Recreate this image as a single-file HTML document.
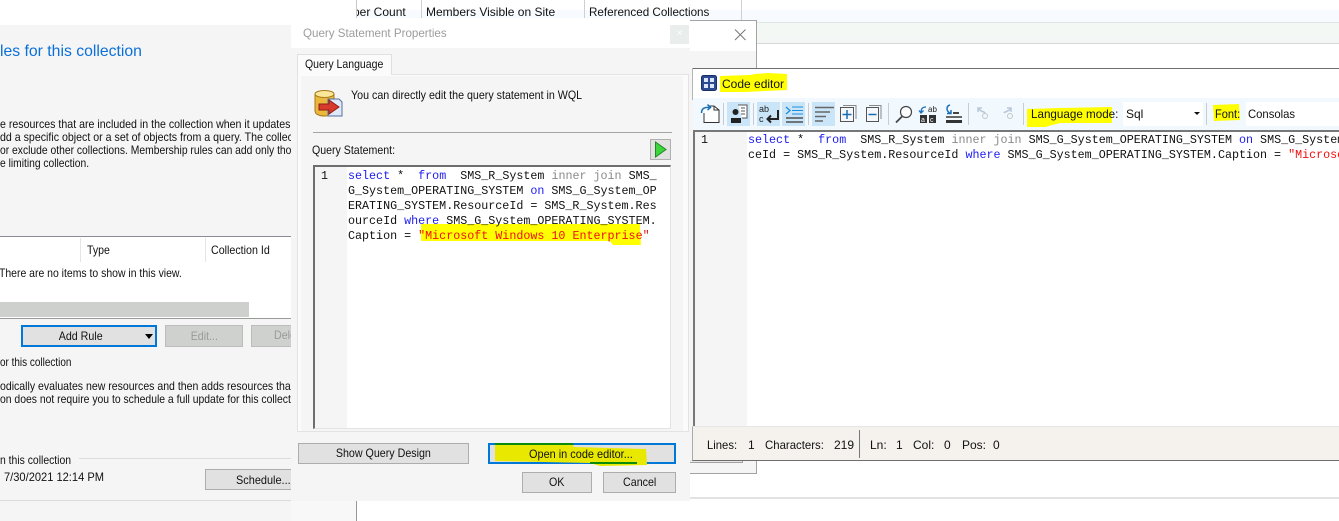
<!DOCTYPE html>
<html><head><meta charset="utf-8">
<style>
*{box-sizing:border-box}
html,body{margin:0;padding:0;background:#fff}
body{width:1339px;height:521px;position:relative;overflow:hidden;font-family:"Liberation Sans",sans-serif;font-size:12px;color:#111}
.a{position:absolute}
.t{position:absolute;white-space:nowrap;line-height:14px;height:14px;transform-origin:0 0;transform:scaleX(var(--s,1))}
.b{position:absolute;background:#e1e1e1;border:1px solid #adadad;text-align:center;line-height:19px;white-space:nowrap;overflow:hidden}
.b span{display:inline-block;transform:scaleX(.89)}
.m{font-family:"Liberation Mono",monospace;font-size:11.7px;line-height:15px;white-space:pre;position:absolute;color:#111;overflow:hidden}
.k{color:#1c1cf0}.g{color:#8a8a8a}.r{color:#f01010}
</style></head><body>

<!-- background list header -->
<div class="a" style="left:356px;top:10px;width:983px;height:12px;background:#f7fbff"></div>
<div class="a" style="left:356px;top:22px;width:983px;height:1px;background:#dfe3e3"></div>
<div class="a" style="left:741px;top:23px;width:598px;height:20px;background:linear-gradient(#f3f9f4,#f3f6f5)"></div>
<div class="a" style="left:741px;top:43px;width:598px;height:1px;background:#d3d9d7"></div>
<div class="a" style="left:356px;top:0;width:1px;height:18px;background:#c8c8c8"></div>
<div class="a" style="left:421px;top:0;width:1px;height:18px;background:#d0d0d0"></div>
<div class="a" style="left:584px;top:0;width:1px;height:18px;background:#d0d0d0"></div>
<div class="a" style="left:741px;top:0;width:1px;height:20px;background:#d0d0d0"></div>
<div class="a" style="left:357px;top:5px;width:60px;height:14px;line-height:14px;overflow:hidden;white-space:nowrap"><span style="display:inline-block;margin-left:-4px">per Count</span></div>
<div class="t" style="left:426px;top:5px">Members Visible on Site</div>
<div class="t" style="left:589px;top:5px;--s:.97">Referenced Collections</div>

<!-- left panel -->
<div class="a" style="left:0;top:25px;width:291px;height:496px;background:#f5f5f5;overflow:hidden">
  <div class="t" style="left:0;top:17px;font-size:16px;line-height:19px;height:19px;color:#0a6fd8;--s:.985">les for this collection</div>
  <div class="t" style="left:0;top:92px;--s:.885">e resources that are included in the collection when it updates</div>
  <div class="t" style="left:0;top:105px;--s:.885">dd a specific object or a set of objects from a query. The collection</div>
  <div class="t" style="left:0;top:118px;--s:.86">or exclude other collections. Membership rules can add only those</div>
  <div class="t" style="left:0;top:131px;--s:.856">e limiting collection.</div>
  <div class="a" style="left:0;top:211px;width:291px;height:82px;background:#fff"></div>
  <div class="a" style="left:0;top:211px;width:291px;height:1px;background:#8b8b95"></div>
  <div class="a" style="left:80px;top:213px;width:1px;height:24px;background:#e5e5e5"></div>
  <div class="a" style="left:205px;top:213px;width:1px;height:24px;background:#e5e5e5"></div>
  <div class="t" style="left:87px;top:218px;--s:.88">Type</div>
  <div class="t" style="left:211px;top:218px;--s:.89">Collection Id</div>
  <div class="t" style="left:-1px;top:241px;--s:.87">There are no items to show in this view.</div>
  <div class="a" style="left:0;top:277px;width:249px;height:15px;background:#cdd0cd"></div>
  <div class="a" style="left:0;top:293px;width:291px;height:1px;background:#9a9a9a"></div>
  <div class="b" style="left:21px;top:300px;width:136px;height:22px;border:2px solid #0078d7;line-height:18px;padding-right:17px"><span>Add Rule</span></div>
  <div class="a" style="left:145px;top:309px;width:0;height:0;border-left:4.5px solid transparent;border-right:4.5px solid transparent;border-top:5px solid #000"></div>
  <div class="b" style="left:165px;top:300px;width:78px;height:22px;background:#cfd1ce;border-color:#bcbcbc;color:#9a9a9a;line-height:20px"><span>Edit...</span></div>
  <div class="b" style="left:251px;top:300px;width:60px;height:22px;background:#cfd1ce;border-color:#bcbcbc"></div>
  <div class="t" style="left:274px;top:303px;color:#9a9a9a;--s:.89">Delete</div>
  <div class="t" style="left:0;top:330px;--s:.83">or this collection</div>
  <div class="t" style="left:0;top:354px;--s:.877">odically evaluates new resources and then adds resources that</div>
  <div class="t" style="left:0;top:367px;--s:.865">on does not require you to schedule a full update for this collection</div>
  <div class="t" style="left:0;top:428px;--s:.866">n this collection</div>
  <div class="a" style="left:79px;top:433px;width:212px;height:1px;background:#dcdcdc"></div>
  <div class="t" style="left:4px;top:445px;--s:.925">7/30/2021 12:14 PM</div>
  <div class="b" style="left:205px;top:444px;width:100px;height:21px"></div>
  <div class="t" style="left:236px;top:448px;--s:.91">Schedule...</div>
  <div class="a" style="left:0;top:475px;width:291px;height:1px;background:#dcdcdc"></div>
</div>
<div class="a" style="left:291px;top:501px;width:65px;height:20px;background:#f8f8f8"></div>
<div class="a" style="left:356px;top:501px;width:1px;height:20px;background:#999"></div>

<!-- window behind -->
<div class="a" style="left:690px;top:20px;width:67px;height:454px;background:#fff;border:1px solid #a3a3a3;border-left:0"></div>
<div class="a" style="left:690px;top:51px;width:66px;height:422px;background:#f5f5f5"></div>
<div class="a" style="left:690px;top:460px;width:53px;height:3px;border-right:1px solid #a3a3a3;border-bottom:1px solid #a3a3a3;background:#e6e6e6"></div>
<svg class="a" style="left:734px;top:29px" width="14" height="12"><path d="M1 .5L11.500 11M11.500 .5L1 11" stroke="#777" fill="none"/></svg>
<div class="a" style="left:690px;top:497px;width:649px;height:2px;background:#e2e2e2"></div>

<!-- query dialog -->
<div class="a" style="left:291px;top:18px;width:399px;height:483px;background:#f5f5f5"></div>
<div class="a" style="left:291px;top:18px;width:399px;height:30px;background:#fff"></div>
<div class="t" style="left:303px;top:26px;color:#9c9c9c;--s:.966">Query Statement Properties</div>
<div class="a" style="left:670px;top:25px;width:19px;height:19px;background:#e9eeec;color:#fff;text-align:center;font-size:10px;line-height:18px">×</div>
<div class="a" style="left:297px;top:74px;width:392px;height:358px;background:#fbfbfb;border:1px solid #e3e3e3"></div>
<div class="a" style="left:301px;top:76px;width:382px;height:355px;background:#f5f5f5"></div>
<div class="a" style="left:297px;top:54px;width:95px;height:21px;background:#fbfbfb;border:1px solid #e0e0e0;border-bottom:0"></div>
<div class="t" style="left:305px;top:57px;--s:.876">Query Language</div>
<div class="t" style="left:351px;top:88px;--s:.89">You can directly edit the query statement in WQL</div>
<div class="a" style="left:313px;top:132px;width:359px;height:1px;background:#a5a5a5"></div>
<div class="t" style="left:312px;top:143px;--s:.883">Query Statement:</div>
<div class="a" style="left:650px;top:139px;width:21px;height:21px;background:#e1e1e1;border:1px solid #b0b0b0"></div>
<svg class="a" style="left:653px;top:141px" width="16" height="17"><path d="M2.500 1L13 8.500L2.500 16Z" fill="#3dd43d" stroke="#208a20"/></svg>
<svg class="a" style="left:314px;top:89px" width="34" height="30">
  <path d="M1 5V22C1 25 5 27 11 27C17 27 20 25 20 22V5Z" fill="#eab83c" stroke="#a87a18"/>
  <ellipse cx="10.500" cy="5" rx="9.500" ry="3.500" fill="#fbe79a" stroke="#a87a18"/>
  <path d="M14 10H25L28 13V27H14Z" fill="#dfe9f7" stroke="#5470a0"/>
  <path d="M5 15H15V11L25 18L15 25V21H5Z" fill="#d93a2e" stroke="#8f1f18"/>
</svg>

<!-- query box -->
<div class="a" style="left:313px;top:165px;width:358px;height:264px;background:#fff;border-top:2px solid #6e6e6e;border-left:2px solid #6e6e6e;border-right:1px solid #e3e3e3;border-bottom:1px solid #e3e3e3"></div>
<div class="a" style="left:315px;top:167px;width:32px;height:261px;background:#f5f5f5"></div>
<svg class="a" style="left:0;top:0" width="1339" height="521">
  <path d="M421 224H640V228L641 245H613L610 241H421Z" fill="#ffff00"/>
</svg>
<div class="t" style="left:321px;top:169px;font-family:'Liberation Mono',monospace;font-size:11.7px">1</div>
<div class="m" style="left:348px;top:169px"><span class="k">select</span> *  <span class="k">from</span>  SMS_R_System <span class="g">inner join</span> SMS_
G_System_OPERATING_SYSTEM <span class="k">on</span> SMS_G_System_OP
ERATING_SYSTEM.ResourceId = SMS_R_System.Res
ourceId <span class="k">where</span> SMS_G_System_OPERATING_SYSTEM.
Caption = <span class="r">"Microsoft Windows 10 Enterprise"</span></div>

<!-- dialog buttons -->
<div class="b" style="left:298px;top:443px;width:171px;height:21px"><span>Show Query Design</span></div>
<div class="b" style="left:488px;top:443px;width:188px;height:21px;border:2px solid #0078d7"></div>
<svg class="a" style="left:0;top:0" width="1339" height="521">
  <path d="M495 445L573 445L574 447L646 449L647 465L600 466L590 463L495 461Z" fill="#e8e800"/>
  <rect x="495" y="443" width="78" height="2" fill="#0a8a0a"/>
  <rect x="590" y="462" width="47" height="2" fill="#0a8a0a"/>
</svg>
<div class="t" style="left:529px;top:447px;--s:.91">Open in code editor...</div>
<div class="b" style="left:522px;top:472px;width:70px;height:21px"><span>OK</span></div>
<div class="b" style="left:603px;top:472px;width:73px;height:21px"><span>Cancel</span></div>

<!-- code editor -->
<div class="a" style="left:692px;top:68px;width:647px;height:1px;background:#6e6e6e"></div>
<div class="a" style="left:692px;top:68px;width:1px;height:32px;background:#b5b5b5"></div>
<div class="a" style="left:693px;top:69px;width:646px;height:29px;background:#fff"></div>
<svg class="a" style="left:0;top:0" width="1339" height="521">
  <path d="M720 76L750 75L755 74L768 73L787 74L787 90L765 91L745 92L720 92Z" fill="#ffff00"/>
</svg>
<div class="t" style="left:722px;top:77px">Code editor</div>
<svg class="a" style="left:701px;top:75px" width="16" height="16">
  <rect x=".5" y=".5" width="15" height="15" rx="2" fill="#2c4a92" stroke="#1b2f66"/>
  <rect x="3" y="3" width="4" height="4" fill="#dce6f8"/><rect x="9" y="3" width="4" height="4" fill="#dce6f8"/>
  <rect x="3" y="9" width="4" height="4" fill="#dce6f8"/><rect x="9" y="9" width="4" height="4" fill="#dce6f8"/>
</svg>
<div class="a" style="left:693px;top:98px;width:646px;height:32px;background:#f1f8fe"></div>
<div class="a" style="left:727px;top:102px;width:23px;height:24px;background:#cbe5f8"></div>
<div class="a" style="left:757px;top:102px;width:23px;height:24px;background:#cbe5f8"></div>
<div class="a" style="left:782px;top:102px;width:23px;height:24px;background:#cbe5f8"></div>
<div class="a" style="left:812px;top:102px;width:23px;height:24px;background:#cbe5f8"></div>
<svg class="a" style="left:0;top:0" width="1339" height="521">
  <g fill="#c8ccd0">
    <rect x="723" y="103" width="1" height="22"/><rect x="753" y="103" width="1" height="22"/>
    <rect x="808" y="103" width="1" height="22"/><rect x="888" y="103" width="1" height="22"/>
    <rect x="968" y="103" width="1" height="22"/><rect x="1023" y="103" width="1" height="22"/>
    <rect x="1206" y="103" width="1" height="22"/>
  </g>
  <path d="M1027 109L1060 108L1112 107L1112 123L1060 123L1045 127L1027 127Z" fill="#ffff00"/>
  <path d="M1213 105L1239 104L1240 120L1214 121Z" fill="#ffff00"/>
  <!-- new/arrow doc -->
  <path d="M704 113V122.500H719V110L714 106H709" fill="#fff" stroke="#333"/>
  <path d="M714 106V110H719" fill="none" stroke="#333"/>
  <path d="M701.500 113C701.500 108 705 107 710 107.500M707.500 104.500L710.500 107.500L707.500 110" fill="none" stroke="#1a70b8" stroke-width="1.500"/>
  <!-- props -->
  <path d="M738 105H747V118H742" fill="#fff" stroke="#555"/>
  <path d="M741 108H745M741 111H745M741 114H745" stroke="#555"/>
  <circle cx="735.500" cy="112" r="3" fill="#222"/>
  <path d="M731 123V118H741V123Z" fill="#222"/>
  <!-- ab c wrap -->
  <text x="759" y="112" font-family="Liberation Sans" font-size="9" fill="#222">ab</text>
  <text x="759" y="122" font-family="Liberation Sans" font-size="9" fill="#222">c</text>
  <path d="M778 110V119H768M771 115.500L767.500 119L771 122.500" fill="none" stroke="#222" stroke-width="2"/>
  <!-- indent -->
  <path d="M786 107L790 110.500L786 114" fill="none" stroke="#1a8fe0" stroke-width="1.300"/>
  <path d="M792 107H803M792 110.500H803M792 114H803" stroke="#1a8fe0"/>
  <path d="M786 118H803M786 122H803" stroke="#333" stroke-width="1.200"/>
  <!-- list -->
  <path d="M815 107.500H834M815 112H830M815 116.500H826M815 121H823" stroke="#666" stroke-width="1.500"/>
  <!-- plus -->
  <rect x="840.500" y="107.500" width="13" height="14" fill="#f4f8fc" stroke="#555"/>
  <path d="M843 105.500H856V119" fill="none" stroke="#888"/>
  <path d="M847 110V119M842.500 114.500H851.500" stroke="#1a6cb0" stroke-width="1.500"/>
  <!-- minus -->
  <rect x="866.500" y="107.500" width="12" height="14" fill="#f4f8fc" stroke="#555"/>
  <path d="M869 105.500H881V119" fill="none" stroke="#888"/>
  <path d="M868.500 114.500H876.500" stroke="#1a6cb0" stroke-width="1.500"/>
  <!-- search -->
  <circle cx="906" cy="112" r="5.500" fill="#fff" stroke="#444" stroke-width="1.200"/>
  <path d="M902 116.500L896 122.500" stroke="#444" stroke-width="1.800"/>
  <!-- replace -->
  <rect x="920" y="115" width="7" height="8" fill="#333"/><rect x="929" y="115" width="7" height="8" fill="#333"/>
  <text x="921" y="122" font-family="Liberation Sans" font-size="7" fill="#fff">a</text>
  <text x="930" y="122" font-family="Liberation Sans" font-size="7" fill="#fff">c</text>
  <text x="928" y="112" font-family="Liberation Sans" font-size="8" fill="#222">ab</text>
  <path d="M926 107C922 107 921 109 921 113M919 110.500L921 113L923.500 110.500" fill="none" stroke="#1a70b8" stroke-width="1.300"/>
  <!-- goto -->
  <path d="M950 105C946 106 946 111 950 113M947 113.500H951V110" fill="none" stroke="#1a70b8" stroke-width="1.500"/>
  <rect x="953" y="112" width="6" height="2" fill="#444"/>
  <rect x="946" y="116" width="16" height="2" fill="#666"/>
  <rect x="946" y="120" width="16" height="3" fill="#333"/>
  <!-- undo/redo disabled -->
  <path d="M982 108H978V112M978 108C980 112 984 111 985 113" fill="none" stroke="#b8c8d8" stroke-width="1.500"/>
  <circle cx="985" cy="116" r="2.500" fill="none" stroke="#c6c6c6"/>
  <path d="M1007 108H1011V112M1011 108C1009 112 1005 111 1004 113" fill="none" stroke="#b8c8d8" stroke-width="1.500"/>
  <circle cx="1010" cy="116" r="2.500" fill="none" stroke="#c6c6c6"/>
</svg>
<div class="t" style="left:1031px;top:107px;--s:.97">Language mode:</div>
<div class="a" style="left:1123px;top:102px;width:80px;height:24px;background:#fff"></div>
<div class="t" style="left:1126px;top:107px">Sql</div>
<div class="a" style="left:1194px;top:112px;width:0;height:0;border-left:3px solid transparent;border-right:3px solid transparent;border-top:3px solid #111"></div>
<div class="t" style="left:1215px;top:107px;--s:.92">Font:</div>
<div class="a" style="left:1246px;top:102px;width:93px;height:24px;background:#fff"></div>
<div class="t" style="left:1248px;top:107px;--s:.94">Consolas</div>

<div class="a" style="left:693px;top:130px;width:646px;height:297px;background:#fff;border-top:2px solid #777;border-left:2px solid #777"></div>
<div class="a" style="left:695px;top:132px;width:52px;height:295px;background:#f5f5f5"></div>
<div class="t" style="left:701px;top:133px;font-family:'Liberation Mono',monospace;font-size:11.7px">1</div>
<div class="m" style="left:748px;top:133px;width:591px;height:30px"><span class="k">select</span> *  <span class="k">from</span>  SMS_R_System <span class="g">inner join</span> SMS_G_System_OPERATING_SYSTEM <span class="k">on</span> SMS_G_System
ceId = SMS_R_System.ResourceId <span class="k">where</span> SMS_G_System_OPERATING_SYSTEM.Caption = <span class="r">"Microsof</span></div>

<!-- status -->
<div class="a" style="left:692px;top:426px;width:647px;height:35px;background:#f5f2ee;border-top:1px solid #e6e6e6;border-left:1px solid #aaa;border-bottom:1px solid #6e6e6e"></div>
<div class="t" style="left:707px;top:438px;--s:.94">Lines:</div>
<div class="t" style="left:748px;top:438px">1</div>
<div class="t" style="left:765px;top:438px;--s:.95">Characters:</div>
<div class="t" style="left:834px;top:438px">219</div>
<div class="a" style="left:859px;top:430px;width:1px;height:28px;background:#777"></div>
<div class="t" style="left:870px;top:438px">Ln:</div>
<div class="t" style="left:896px;top:438px">1</div>
<div class="t" style="left:913px;top:438px">Col:</div>
<div class="t" style="left:944px;top:438px">0</div>
<div class="t" style="left:962px;top:438px">Pos:</div>
<div class="t" style="left:993px;top:438px">0</div>
</body></html>
